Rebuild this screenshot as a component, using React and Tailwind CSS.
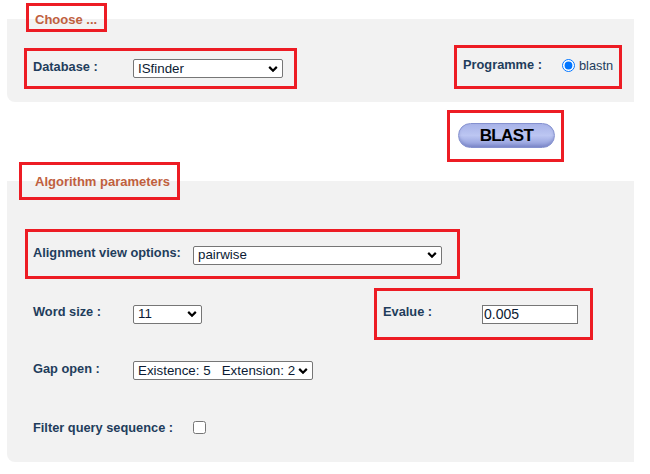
import React from "react";

const RED = "border-[3px] border-[#ed1c24]";

function Chevron() {
  return (
    <svg
      className="pointer-events-none absolute right-[5px] top-1/2 -translate-y-1/2"
      width="10"
      height="7"
      viewBox="0 0 10 7"
    >
      <path d="M1.2 1.4 L5 5.2 L8.8 1.4" fill="none" stroke="#000" strokeWidth="2.2" />
    </svg>
  );
}

function Select({ className, value }) {
  return (
    <div className={"relative shrink-0 " + className}>
      <select
        defaultValue={value}
        className="block h-full w-full appearance-none rounded-[2px] border border-[#767676] bg-white pl-[4px] pr-[16px] text-[13.33px] leading-none text-[#0b1a33] outline-none"
      >
        <option value={value}>{value}</option>
      </select>
      <Chevron />
    </div>
  );
}

function Label({ className, children }) {
  return (
    <div
      className={
        "shrink-0 text-[12.8px] font-bold leading-none text-[#1f3d5c] mb-[3px] " + (className || "")
      }
    >
      {children}
    </div>
  );
}

export default function App() {
  return (
    <div className="flex h-[474px] w-[650px] flex-col items-start overflow-hidden bg-white pt-[19px] font-['Liberation_Sans',Arial,sans-serif]">
      {/* Panel 1 */}
      <div className="ml-[7px] flex w-[627px] flex-col items-start rounded-bl-[8px] bg-[#f2f2f2] pb-[13px]">
        <div className={"-mt-[16px] ml-[19px] flex h-[29px] w-[81px] items-center pl-[6px] pt-[3px] " + RED}>
          <span className="text-[13px] font-bold leading-none text-[#c0603e]">Choose ...</span>
        </div>
        <div className="ml-[17px] mt-[13px] flex items-end">
          <div className={"flex h-[41px] w-[273px] items-center pl-[6px] " + RED}>
            <Label className="w-[100px]">Database :</Label>
            <Select className="h-[19px] w-[150px]" value="ISfinder" />
          </div>
          <div className={"ml-[157px] flex h-[44px] w-[168px] items-center pl-[6px] " + RED}>
            <Label className="w-[99px]">Programme :</Label>
            <input
              type="radio"
              checked
              readOnly
              className="mb-[3px] h-[13px] w-[13px] shrink-0 accent-[#0075ff]"
            />
            <span className="mb-[2px] ml-[4px] text-[12.8px] leading-none text-[#1f3d5c]">blastn</span>
          </div>
        </div>
      </div>

      {/* BLAST button */}
      <div className={"ml-[447px] mt-[8px] h-[52px] w-[117px] pl-[8px] pt-[10px] " + RED}>
        <button
          type="button"
          className="flex h-[25px] w-[97px] items-center justify-center rounded-full border border-[#8591cf] bg-linear-to-b from-[#a8b3e8] via-[#bcc6f2] to-[#8d99d8] text-[17px] font-bold leading-none tracking-[-0.6px] text-black shadow-[inset_0_-2px_3px_rgba(90,100,170,0.35)]"
        >
          BLAST
        </button>
      </div>

      {/* Panel 2 */}
      <div className="ml-[7px] mt-[19px] flex w-[627px] flex-col items-start rounded-bl-[8px] bg-[#f2f2f2] pb-[27px]">
        <div className={"-mt-[19px] ml-[12px] flex h-[38px] w-[161px] items-center pl-[13px] pt-[1px] " + RED}>
          <span className="text-[13px] font-bold leading-none text-[#c0603e]">Algorithm parameters</span>
        </div>

        <div className={"ml-[18px] mt-[29px] flex h-[50px] w-[435px] items-center pl-[5px] pt-[2px] " + RED}>
          <Label className="w-[160px]">Alignment view options:</Label>
          <Select className="h-[19px] w-[249px]" value="pairwise" />
        </div>

        <div className="mt-[9px] flex items-center pl-[26px]">
          <Label className="w-[100px]">Word size :</Label>
          <Select className="h-[19px] w-[69px]" value="11" />
          <div className={"ml-[172px] flex h-[52px] w-[219px] items-center pl-[6px] " + RED}>
            <Label className="w-[99px]">Evalue :</Label>
            <input
              type="text"
              defaultValue="0.005"
              className="block h-[19px] w-[96px] border border-[#767676] bg-white px-[1px] text-[14px] leading-none text-[#0b1a33] outline-none"
            />
          </div>
        </div>

        <div className="mt-[21px] flex items-center pl-[26px]">
          <Label className="w-[100px]">Gap open :</Label>
          <Select
            className="h-[19px] w-[180px]"
            value={"Existence: 5\u00a0\u00a0\u00a0Extension: 2"}
          />
        </div>

        <div className="mt-[40px] flex items-center pl-[26px]">
          <Label className="w-[160px] !mb-0 mt-[2px]">Filter query sequence :</Label>
          <input type="checkbox" className="block h-[13px] w-[13px] shrink-0" />
        </div>
      </div>
    </div>
  );
}
